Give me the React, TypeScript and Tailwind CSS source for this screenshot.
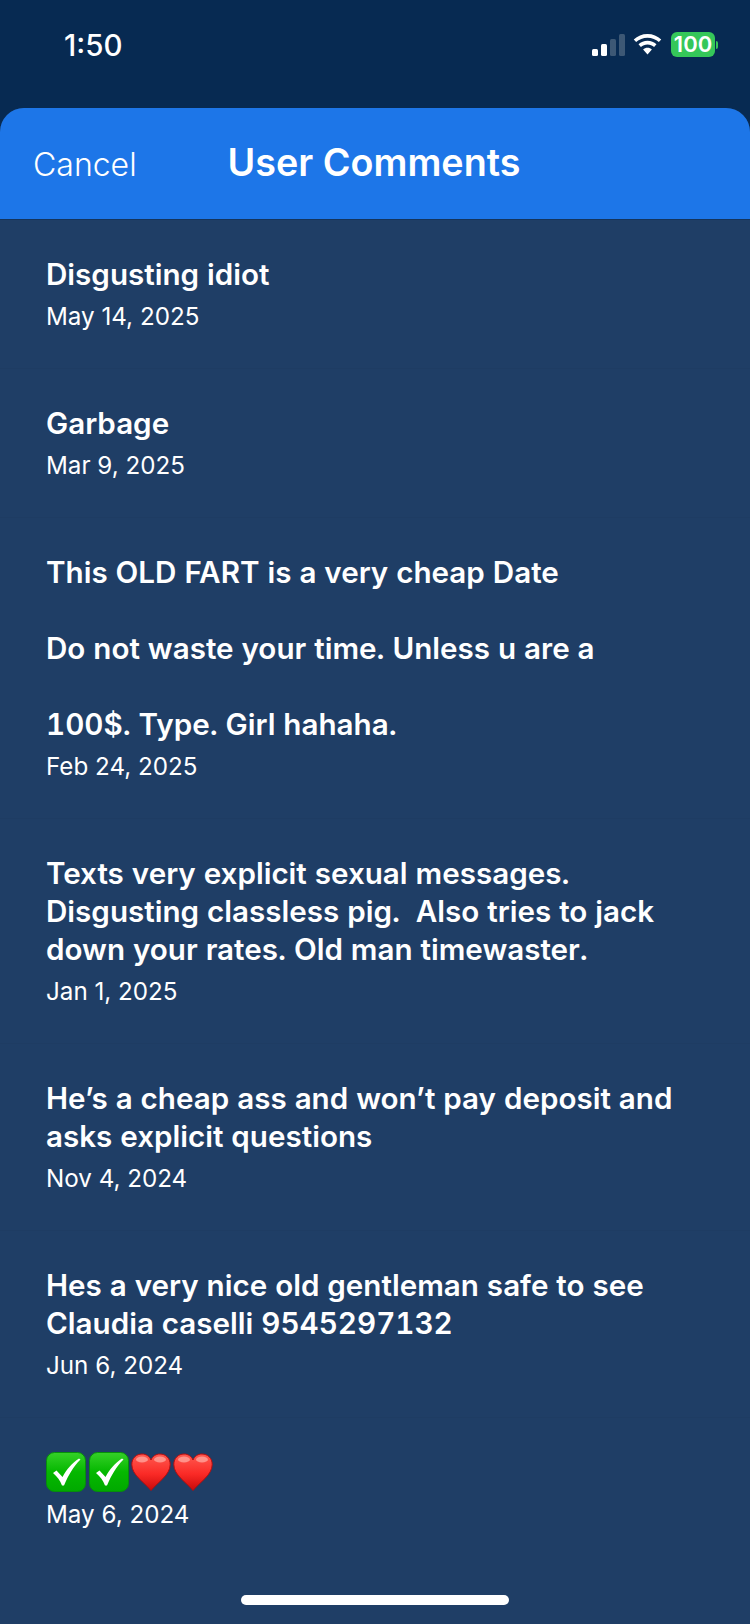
const comments = [
  { text: "Disgusting idiot", date: "May 14, 2025" },
  { text: "Garbage", date: "Mar 9, 2025" },
  {
    text: "This OLD FART is a very cheap Date\n\nDo not waste your time. Unless u are a\n\n100$. Type. Girl hahaha.",
    date: "Feb 24, 2025",
  },
  {
    text: "Texts very explicit sexual messages.\nDisgusting classless pig.  Also tries to jack\ndown your rates. Old man timewaster.",
    date: "Jan 1, 2025",
  },
  {
    text: "He’s a cheap ass and won’t pay deposit and\nasks explicit questions",
    date: "Nov 4, 2024",
  },
  {
    text: "Hes a very nice old gentleman safe to see\nClaudia caselli 9545297132",
    date: "Jun 6, 2024",
  },
];

function CheckEmoji() {
  return (
    <svg width="40" height="40" viewBox="0 0 40 40">
      <defs>
        <linearGradient id="chk" x1="0" y1="0" x2="0" y2="1">
          <stop offset="0" stopColor="#35d028" />
          <stop offset="0.5" stopColor="#05b800" />
          <stop offset="1" stopColor="#01a900" />
        </linearGradient>
      </defs>
      <rect x="0.5" y="0.5" width="39" height="39" rx="8" fill="url(#chk)" stroke="#068f0a" />
      <path d="M7 21l3.500-2.500 6 6.500C21 17 26 11 33 6.500l1.500 1C27 15 22.500 23 18 33.500H16C14 28 11 24.500 7 21z" fill="#fff" />
    </svg>
  );
}

function HeartEmoji() {
  return (
    <svg width="40" height="40" viewBox="0 0 40 40">
      <defs>
        <linearGradient id="hrt" x1="0" y1="0" x2="0" y2="1">
          <stop offset="0" stopColor="#ff5a50" />
          <stop offset="0.55" stopColor="#fa2a26" />
          <stop offset="1" stopColor="#c80a0a" />
        </linearGradient>
      </defs>
      <path
        d="M20 38.500C13 30 .8 23 .8 12.500.8 6 5.500 2 11 2c4 0 7.500 2.200 9 6 1.500-3.800 5-6 9-6 5.500 0 10.200 4 10.200 10.500C39.200 23 27 30 20 38.500z"
        fill="url(#hrt)"
        stroke="#b80c0c"
        strokeWidth="1"
      />
      <ellipse cx="11" cy="7.500" rx="6" ry="3" fill="#ffb0a8" opacity="0.7" />
      <ellipse cx="29" cy="7.500" rx="6" ry="3" fill="#ffb0a8" opacity="0.7" />
    </svg>
  );
}

function StatusIcons() {
  return (
    <div className="flex items-center">
      <svg width="33" height="22" viewBox="0 0 33 22">
        <rect x="0" y="15" width="6" height="7" rx="1.500" fill="#fff" />
        <rect x="9" y="10" width="6" height="12" rx="1.500" fill="#fff" />
        <rect x="18" y="5" width="6" height="17" rx="1.500" fill="#3d5875" />
        <rect x="27" y="0" width="6" height="22" rx="1.500" fill="#3d5875" />
      </svg>
      <svg className="ml-[8px]" width="29" height="21" viewBox="0 0 30 22" fill="#fff">
        <path d="M15 0c5.500 0 10.600 2.100 14.400 5.700l-2.500 2.800C23.800 5.600 19.600 3.800 15 3.800S6.200 5.600 3.100 8.500L.6 5.700C4.400 2.100 9.500 0 15 0z" />
        <path d="M15 7.200c3.600 0 6.900 1.400 9.400 3.600l-2.500 2.800c-1.800-1.600-4.200-2.600-6.900-2.600s-5.100 1-6.900 2.600l-2.500-2.800c2.500-2.200 5.800-3.600 9.400-3.600z" />
        <path d="M15 14.400c1.800 0 3.400.7 4.600 1.800L15 21.500l-4.600-5.300c1.200-1.100 2.800-1.800 4.600-1.800z" />
      </svg>
      <div className="ml-[9px] flex items-center">
        <div className="flex h-[25px] w-[44px] items-center justify-center rounded-[6px] bg-[#35c759] text-[22px] font-semibold text-white">
          100
        </div>
        <div className="ml-[1px] h-[8px] w-[2px] rounded-r-sm bg-[#35c759]" />
      </div>
    </div>
  );
}

export default function App() {
  return (
    <div className="flex h-[1624px] w-[750px] flex-col overflow-hidden bg-[#072a52] font-['Inter',sans-serif] text-white">
      {/* Status bar */}
      <div className="flex h-[108px] items-start justify-between pl-[64px] pr-[32px] pt-[27px]">
        <span className="text-[29.500px] leading-[36px] font-medium">1:50</span>
        <div className="pt-[5px]">
          <StatusIcons />
        </div>
      </div>

      {/* Sheet */}
      <div className="flex flex-1 flex-col overflow-hidden rounded-t-[24px] bg-[#1f3e66]">
        <div className="grid h-[112px] grid-cols-[1fr_auto_1fr] items-center border-b border-[#14345c] bg-[#1d76e8] px-[33px]">
          <span className="pt-[2px] text-[32px] font-[350]">Cancel</span>
          <span className="pb-[2px] pr-[2px] text-[37.700px] font-semibold">User Comments</span>
          <span />
        </div>

        <div className="flex flex-1 flex-col">
          {comments.map((c) => (
            <div key={c.date} className="border-b border-[#1e3c63] px-[46px] pt-[35px] pb-[36px]">
              <p className="whitespace-pre-wrap text-[29.600px] leading-[38px] font-semibold tabular-nums">{c.text}</p>
              <p className="mt-[9px] text-[24.200px] leading-[30px]">{c.date}</p>
            </div>
          ))}
          <div className="px-[46px] pt-[35px]">
            <div className="flex h-[38px] items-center">
              <CheckEmoji />
              <div className="ml-[3px]"><CheckEmoji /></div>
              <div className="ml-[2px]"><HeartEmoji /></div>
              <div className="ml-[2px]"><HeartEmoji /></div>
            </div>
            <p className="mt-[9px] text-[24.200px] leading-[30px]">May 6, 2024</p>
          </div>
          <div className="flex flex-1 items-end justify-center pb-[19px]">
            <div className="h-[10px] w-[268px] rounded-full bg-white" />
          </div>
        </div>
      </div>
    </div>
  );
}
